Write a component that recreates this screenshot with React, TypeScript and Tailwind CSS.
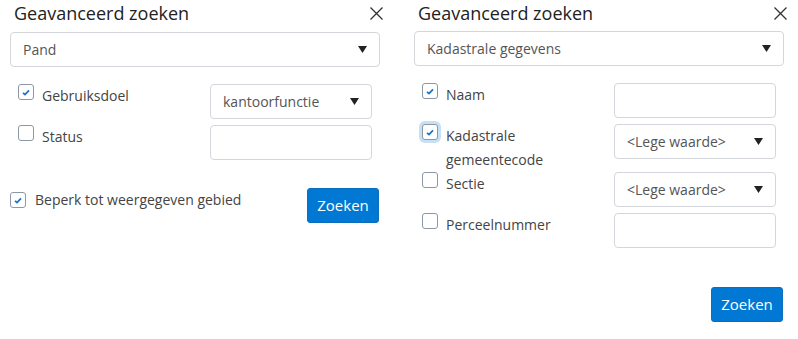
import React from 'react';

function CloseIcon() {
  return (
    <svg width="15" height="15" viewBox="0 0 15 15" className="text-[#333]">
      <path d="M1.5 1.5 L13.5 13.5 M13.5 1.5 L1.5 13.5" stroke="currentColor" strokeWidth="1.3" fill="none" />
    </svg>
  );
}

function Caret() {
  return (
    <svg width="9" height="7" viewBox="0 0 9 7">
      <path d="M0 0 H9 L4.5 7 Z" fill="#222" />
    </svg>
  );
}

function Checkbox({ checked, focused }: { checked?: boolean; focused?: boolean }) {
  return (
    <span
      className={
        'flex w-[16px] h-[16px] shrink-0 items-center justify-center rounded-[3px] border border-[#8c98a8] bg-white ' +
        (focused ? 'ring-[3px] ring-[#c7e0f4]' : '')
      }
    >
      {checked && (
        <svg width="8" height="7" viewBox="0 0 8 7">
          <path d="M1 3.8 L3 5.6 L7 1.3" stroke="#1a73c8" strokeWidth="1.8" fill="none" />
        </svg>
      )}
    </span>
  );
}

function Select({ value, wide }: { value: string; wide?: boolean }) {
  return (
    <div
      className={
        'flex items-center justify-between h-[35px] rounded-[4px] border border-[#d3d6da] bg-white text-[14px] text-[#555] pl-[12px] pr-[12px] ' +
        (wide ? '' : 'w-[162px]')
      }
    >
      <span>{value}</span>
      <Caret />
    </div>
  );
}

function TextInput() {
  return <div className="w-[162px] h-[35px] rounded-[4px] border border-[#d3d6da] bg-white" />;
}

function Row({
  label,
  checked,
  focused,
  tall,
  children,
}: {
  label: React.ReactNode;
  checked?: boolean;
  focused?: boolean;
  tall?: boolean;
  children: React.ReactNode;
}) {
  return (
    <div className={'flex items-start pl-[8px] pr-[8px] ' + (tall ? '-mb-[6px]' : '')}>
      <div className="flex flex-1 items-start">
        <Checkbox checked={checked} focused={focused} />
        <span className="ml-[8px] leading-[24px] text-[14px] text-[#444]">{label}</span>
      </div>
      {children}
    </div>
  );
}

function Header() {
  return (
    <div className="flex items-center justify-between h-[24px] mt-[1px] pl-[4px] -mr-[4px]">
      <h2 className="text-[18px] text-[#222] leading-[24px]">Geavanceerd zoeken</h2>
      <CloseIcon />
    </div>
  );
}

function ZoekenButton() {
  return (
    <button className="w-[72px] h-[35px] mr-[1px] rounded-[3px] border border-[#0a6fbd] bg-[#0078d4] text-[15px] text-white">
      Zoeken
    </button>
  );
}

export default function App() {
  return (
    <div className="flex w-[798px] h-[339px] bg-white font-['Open_Sans',sans-serif]">
      <div className="w-[390px] px-[10px]">
        <Header />
        <div className="mt-[7px]">
          <Select value="Pand" wide />
        </div>
        <div className="mt-[17px] flex flex-col gap-[6px]">
          <Row label="Gebruiksdoel" checked>
            <Select value="kantoorfunctie" />
          </Row>
          <Row label="Status">
            <TextInput />
          </Row>
        </div>
        <div className="mt-[28px] flex items-start justify-between">
          <div className="flex items-start">
            <span className="mt-[4px]">
              <Checkbox checked />
            </span>
            <span className="ml-[9px] leading-[24px] text-[14px] text-[#444]">Beperk tot weergegeven gebied</span>
          </div>
          <ZoekenButton />
        </div>
      </div>

      <div className="w-[390px] ml-[14px] px-[10px]">
        <Header />
        <div className="mt-[6px]">
          <Select value="Kadastrale gegevens" wide />
        </div>
        <div className="mt-[17px] flex flex-col gap-[6px]">
          <Row label="Naam" checked>
            <TextInput />
          </Row>
          <Row
            label={
              <>
                Kadastrale
                <br />
                gemeentecode
              </>
            }
            checked
            focused
            tall
          >
            <Select value="<Lege waarde>" />
          </Row>
          <Row label="Sectie">
            <Select value="<Lege waarde>" />
          </Row>
          <Row label="Perceelnummer">
            <TextInput />
          </Row>
        </div>
        <div className="mt-[39px] flex justify-end">
          <ZoekenButton />
        </div>
      </div>
    </div>
  );
}
